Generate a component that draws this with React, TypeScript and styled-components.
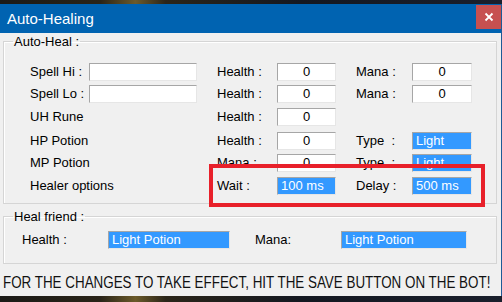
import styled, { createGlobalStyle } from "styled-components";

const GlobalStyle = createGlobalStyle`
    html, body {
        margin: 0;
        padding: 0;
        background: #10131c;
    }
`;

const healRows = [
    { name: "Spell Hi :", spell: true, health: "0", mana: "0" },
    { name: "Spell Lo :", spell: true, health: "0", mana: "0" },
    { name: "UH Rune", health: "0" },
    { name: "HP Potion", health: "0", type: "Light" },
    { name: "MP Potion", health: "0", type: "Light", manaLabel: true },
];

function App() {
    return (
        <Screen>
            <GlobalStyle />
            <Window>
                <TitleBar>
                    <Title>Auto-Healing</Title>
                    <CloseButton>
                        <svg width="10" height="10" viewBox="0 0 10 10">
                            <path d="M1.5 1.5 L8.5 8.5 M8.5 1.5 L1.5 8.5" stroke="#fff" strokeWidth="1.8" />
                        </svg>
                    </CloseButton>
                </TitleBar>

                <Body>
                    <Group $top={0}>
                        <Legend>Auto-Heal :</Legend>
                        <HealGrid>
                            {healRows.map((row) => (
                                <Row key={row.name}>
                                    <Label>{row.name}</Label>
                                    <Cell>{row.spell && <Field $width={108} />}</Cell>
                                    <Label>{row.manaLabel ? "Mana :" : "Health :"}</Label>
                                    <Cell>
                                        <Field $width={59}>{row.health}</Field>
                                    </Cell>
                                    <Label>{row.mana ? "Mana :" : row.type ? "Type  :" : ""}</Label>
                                    <Cell>
                                        {row.mana && <Field $width={60}>{row.mana}</Field>}
                                        {row.type && (
                                            <Field $width={60} $selected>
                                                {row.type}
                                            </Field>
                                        )}
                                    </Cell>
                                </Row>
                            ))}
                            <Row>
                                <Label>Healer options</Label>
                                <Cell />
                                <Label>Wait :</Label>
                                <Cell>
                                    <Field $width={59} $selected>100 ms</Field>
                                </Cell>
                                <Label>Delay :</Label>
                                <Cell>
                                    <Field $width={60} $selected>500 ms</Field>
                                </Cell>
                            </Row>
                        </HealGrid>
                    </Group>

                    <Group $top={5}>
                        <Legend>Heal friend :</Legend>
                        <FriendRow>
                            <FriendLabel $width={86}>Health :</FriendLabel>
                            <Field $width={122} $selected>Light Potion</Field>
                            <FriendLabel $width={86} $offset={25}>Mana:</FriendLabel>
                            <Field $width={126} $selected>Light Potion</Field>
                        </FriendRow>
                    </Group>

                    <Notice>
                        <NoticeText>FOR THE CHANGES TO TAKE EFFECT, HIT THE SAVE BUTTON ON THE BOT!</NoticeText>
                    </Notice>

                    <Highlight />
                </Body>
            </Window>
        </Screen>
    );
}

const Screen = styled.div`
    width: 502px;
    height: 302px;
    padding: 4px 0 6px;
    box-sizing: border-box;
    background:
        linear-gradient(90deg, #1b1a17 0%, #2a2418 20%, #6b5a2a 27%, #2b2519 33%, #141821 60%, #1a1f2c 100%);
    overflow: hidden;
`;

const Window = styled.div`
    width: 502px;
    height: 292px;
    box-sizing: border-box;
    background: #f0f0f0;
    border-right: 1px solid #1e5a96;
    display: flex;
    flex-direction: column;
    font-family: "Liberation Sans", Arial, sans-serif;
    font-size: 13px;
    color: #000;
`;

const TitleBar = styled.div`
    height: 29px;
    flex: none;
    background: #0063b1;
    display: flex;
    align-items: flex-start;
    justify-content: space-between;
`;

const Title = styled.div`
    color: #fff;
    font-size: 15px;
    line-height: 29px;
    padding-left: 7px;
`;

const CloseButton = styled.div`
    width: 25px;
    height: 24px;
    margin-top: 1px;
    background: #c75050;
    display: flex;
    align-items: center;
    justify-content: center;
`;

const Body = styled.div`
    position: relative;
    flex: 1;
    padding: 1px 4px 0 3px;
    display: flex;
    flex-direction: column;
`;

const Group = styled.fieldset<{ $top: number }>`
    margin: ${(p) => p.$top}px 0 0;
    padding: 0;
    min-width: 0;
    border: 1px solid #d5d5d5;
    box-shadow: inset 1px 1px 0 #fff;
`;

const Legend = styled.legend`
    margin-left: 9px;
    padding: 0 1px;
    line-height: 15px;
`;

const HealGrid = styled.div`
    display: grid;
    grid-template-columns: 59px 128px 60px 79px 56px 60px;
    grid-template-rows: 22px 23px 24px 22px 23px 18px;
    padding: 14px 0 8px 26px;
`;

const Row = styled.div`
    display: contents;
`;

const Cell = styled.div`
    display: flex;
    align-items: flex-start;
`;

const Label = styled.div`
    height: 18px;
    line-height: 18px;
    white-space: pre;
`;

const Field = styled.div<{ $width: number; $selected?: boolean }>`
    width: ${(p) => p.$width}px;
    height: 18px;
    box-sizing: border-box;
    border: 1px solid;
    border-color: #a6a6a6 #e6e6e6 #e6e6e6 #a6a6a6;
    background: ${(p) => (p.$selected ? "#3399ff" : "#fff")};
    color: ${(p) => (p.$selected ? "#fff" : "#000")};
    text-align: ${(p) => (p.$selected ? "left" : "center")};
    padding-left: ${(p) => (p.$selected ? "3px" : "0")};
    line-height: 16px;
    white-space: nowrap;
`;

const FriendRow = styled.div`
    display: flex;
    align-items: center;
    padding: 7px 0 14px 18px;
`;

const FriendLabel = styled.div<{ $width: number; $offset?: number }>`
    width: ${(p) => p.$width}px;
    margin-left: ${(p) => p.$offset ?? 0}px;
    line-height: 18px;
`;

const Notice = styled.div`
    margin-top: 8px;
    height: 20px;
    overflow: visible;
`;

const NoticeText = styled.span`
    display: inline-block;
    font-size: 16.5px;
    line-height: 20px;
    color: #111;
    white-space: nowrap;
    transform: scaleX(0.812);
    transform-origin: left center;
`;

const Highlight = styled.div`
    position: absolute;
    left: 209px;
    top: 131px;
    width: 276px;
    height: 43px;
    box-sizing: border-box;
    border: 4px solid #e8202a;
    pointer-events: none;
`;

export default App;
